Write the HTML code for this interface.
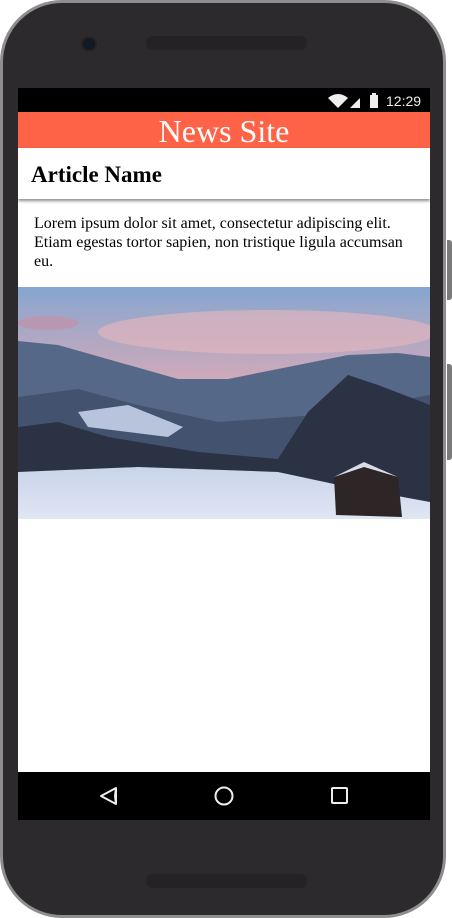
<!DOCTYPE html>
<html><head><style>
body{margin:0;width:452px;height:918px;background:#fff;position:relative;overflow:hidden;font-family:"Liberation Serif",serif}
.phone{position:absolute;left:0;top:0;width:440px;height:912px;border:3px solid #8e8e8e;border-radius:62px;background:#2c2a2d}
.btn{position:absolute;right:0;width:5px;background:#7a7a7a;border-radius:0 3px 3px 0}
.spk{position:absolute;left:143px;width:161px;height:14px;border-radius:7px;background:#242225}
.cam{position:absolute;left:78px;top:33px;width:12px;height:12px;border-radius:50%;background:#111a24;border:2px solid #242225}
.screen{position:absolute;left:18px;top:88px;width:412px;height:732px;background:#fff;overflow:hidden}
.status{height:24px;background:#000;color:#eee;font-family:"Liberation Sans",sans-serif;font-size:14px}
.hdr{height:36px;background:#ff6347;color:#fff;text-align:center;font-size:32px;line-height:38px}
.art{height:51px;box-shadow:0 2px 3px rgba(0,0,0,.45);position:relative;z-index:2}
.art h1{margin:0;padding-left:13px;font-size:23px;line-height:53px;font-weight:bold}
p{margin:0;padding:15px 16px 0 16px;font-size:16px;line-height:19px}
.nav{position:absolute;left:0;top:684px;width:412px;height:48px;background:#000}
</style></head><body>
<div class="phone">
<div class="cam"></div>
<div class="spk" style="top:33px"></div>
<div class="spk" style="top:871px"></div>
</div>
<div class="btn" style="top:240px;height:60px"></div>
<div class="btn" style="top:364px;height:96px"></div>
<div class="screen">
<div class="status"><svg width="412" height="24">
<path d="M310 10 Q320 2 330 10 L320 20Z" fill="#eee"/>
<path d="M342 20 L342 10 L332 20Z" fill="#eee"/>
<rect x="352" y="7" width="8" height="13" fill="#eee"/><rect x="354" y="5" width="4" height="2" fill="#eee"/>
<text x="368" y="18" fill="#eee" font-family="Liberation Sans" font-size="14">12:29</text></svg></div>
<div class="hdr">News Site</div>
<div class="art"><h1>Article Name</h1></div>
<p>Lorem ipsum dolor sit amet, consectetur adipiscing elit. Etiam egestas tortor sapien, non tristique ligula accumsan eu.</p>
<svg style="position:absolute;left:0;top:199px" width="412" height="232">
<defs><linearGradient id="s" x1="0" y1="0" x2="0" y2="1"><stop offset="0" stop-color="#86a6d0"/><stop offset=".45" stop-color="#d9aab6"/><stop offset="1" stop-color="#c0aac4"/></linearGradient>
<linearGradient id="sn" x1="0" y1="0" x2="0" y2="1"><stop offset="0" stop-color="#c9d4ea"/><stop offset="1" stop-color="#dfe6f4"/></linearGradient></defs>
<rect width="412" height="232" fill="url(#s)"/>
<ellipse cx="250" cy="45" rx="170" ry="22" fill="#e9b8bc" opacity=".6"/>
<ellipse cx="30" cy="36" rx="30" ry="7" fill="#c88ca4" opacity=".6"/>
<path d="M0 54 L40 58 L100 75 L160 92 L210 92 L270 80 L330 68 L380 66 L412 70 L412 232 L0 232Z" fill="#566887"/>
<path d="M0 110 L60 102 L120 118 L200 135 L300 128 L412 108 L412 232 L0 232Z" fill="#43526f"/>
<path d="M60 125 L110 118 L165 140 L150 150 L70 140Z" fill="#b8c4dc"/>
<path d="M0 140 L40 135 L90 150 L180 165 L260 172 L290 125 L330 88 L360 98 L412 118 L412 232 L0 232Z" fill="#2a3244"/>
<path d="M0 185 L120 180 L260 185 L330 200 L412 215 L412 232 L0 232Z" fill="url(#sn)"/>
<path d="M316 190 L346 175 L380 190 L384 230 L318 228Z" fill="#2e2626"/>
<path d="M316 190 L346 175 L380 190 L346 180Z" fill="#d8dce8"/>
</svg>
<div class="nav"><svg width="412" height="48">
<path d="M97 24 L98 16 L98 32Z M98 16 L83 24 L98 32" fill="none" stroke="#eee" stroke-width="2" stroke-linejoin="round"/>
<circle cx="206" cy="24" r="8.5" fill="none" stroke="#eee" stroke-width="2"/>
<rect x="314" y="16" width="15" height="15" rx="1" fill="none" stroke="#eee" stroke-width="2"/>
</svg></div>
</div>
</body></html>
